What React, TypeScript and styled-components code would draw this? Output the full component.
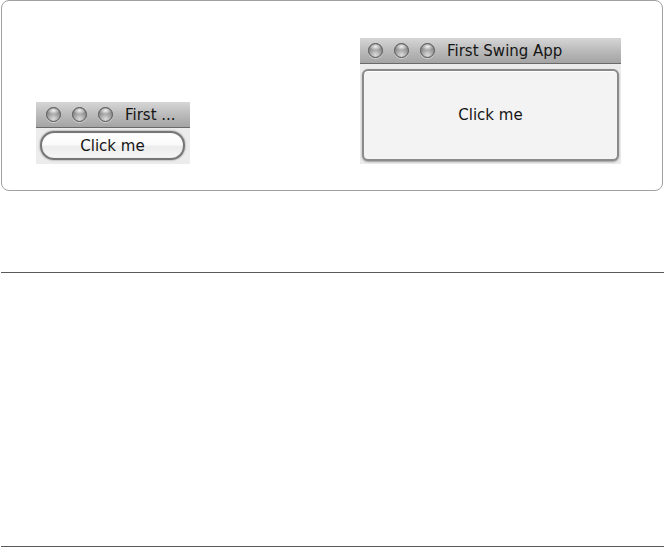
import React from 'react';
import styled, {createGlobalStyle, css} from 'styled-components';

const GlobalStyle = createGlobalStyle`
    html, body {
        margin: 0;
        padding: 0;
        background: #ffffff;
    }
    body {
        font-family: 'DejaVu Sans', 'Liberation Sans', sans-serif;
    }
`;

interface WindowProps {
    title: string,
    small?: boolean
}

interface MyStyle {
    small?: boolean
}

const Light = () => <Circle />;

const MacWindow = (props: WindowProps) => {
    const {title, small} = props;

    return (
        <WindowRoot small={small}>
            <TitleBar small={small}>
                <Lights>
                    <Light />
                    <Light />
                    <Light />
                </Lights>
                <Title>{title}</Title>
            </TitleBar>
            <Content small={small}>
                <Button small={small}>Click me</Button>
            </Content>
        </WindowRoot>
    )
}

const App = () => {
    return (
        <Page>
            <GlobalStyle />
            <Card>
                <MacWindow title="First ..." small />
                <MacWindow title="First Swing App" />
            </Card>
            <Gap />
            <Rule />
            <Blank />
            <Rule />
        </Page>
    )
}

export default App;

const Page = styled.div`
    width: 664px;
    height: 547px;
    overflow: hidden;
`;

const Card = styled.div`
    display: flex;
    align-items: flex-start;
    margin-left: 1px;
    width: 660px;
    height: 189px;
    border: 1px solid #a0a0a0;
    border-radius: 8px;
    background: #fff;
`;

const WindowRoot = styled.div`
    display: flex;
    flex-direction: column;
    background: #ececec;

    ${(props: MyStyle) => props.small ? css`
        width: 154px;
        height: 62px;
        margin: 101px 0 0 34px;
    ` : css`
        width: 261px;
        height: 126px;
        margin: 37px 0 0 170px;
    `};
`;

const TitleBar = styled.div`
    display: flex;
    align-items: center;
    height: 26px;
    flex-shrink: 0;
    box-sizing: border-box;
    background: linear-gradient(#d6d6d6, #b8b8b8 55%, #a4a4a4);
    border-bottom: 1px solid #6a6a6a;
    padding-left: ${(props: MyStyle) => props.small ? '10px' : '8px'};
`;

const Lights = styled.div`
    display: flex;
    gap: 11px;
    margin-right: 12px;
`;

const Circle = styled.span`
    display: block;
    width: 15px;
    height: 15px;
    box-sizing: border-box;
    border-radius: 50%;
    border: 1px solid #555;
    background:
        radial-gradient(ellipse 50% 30% at 50% 20%, rgba(255,255,255,0.9), rgba(255,255,255,0) 100%),
        radial-gradient(circle at 50% 85%, #dcdcdc, #9a9a9a 50%, #707070 100%);
    box-shadow: 0 1px 0 rgba(255,255,255,0.45);
`;

const Title = styled.span`
    font-size: 15px;
    color: #151515;
    white-space: nowrap;
    padding-top: 1px;
`;

const Content = styled.div`
    flex: 1;
    display: flex;
    ${(props: MyStyle) => props.small ? css`
        padding: 3px 5px 4px 4px;
    ` : css`
        padding: 5px 2px 3px 2px;
    `};
`;

const Button = styled.div`
    flex: 1;
    display: flex;
    align-items: center;
    justify-content: center;
    box-sizing: border-box;
    font-size: 15px;
    color: #151515;

    ${(props: MyStyle) => props.small ? css`
        border-radius: 14px;
        border: 2px solid #767676;
        background: linear-gradient(#ffffff, #fbfbfb 45%, #ececec 55%, #f6f6f6);
        box-shadow: 0 0 2px rgba(0,0,0,0.5), inset 0 0 1px rgba(0,0,0,0.25);
        padding-top: 1px;
    ` : css`
        border-radius: 6px;
        border: 2px solid #8a8a8a;
        background: #f3f3f3;
        box-shadow: 0 1px 2px rgba(0,0,0,0.35), inset 0 1px 0 #fff;
        padding-bottom: 1px;
    `};
`;

const Gap = styled.div`
    height: 81px;
`;

const Rule = styled.div`
    margin-left: 1px;
    height: 1px;
    background: #5a5a5a;
`;

const Blank = styled.div`
    height: 273px;
`;
